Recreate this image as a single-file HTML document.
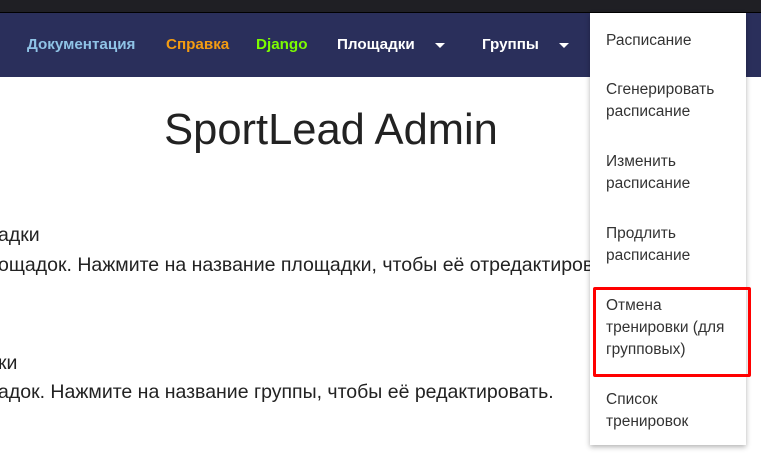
<!DOCTYPE html>
<html><head><meta charset="utf-8"><style>
body{margin:0;width:761px;height:457px;overflow:hidden;background:#fff;font-family:"Liberation Sans","DejaVu Sans",sans-serif;position:relative}
.top{position:absolute;left:0;top:0;width:761px;height:12px;background:#1f1f24;border-bottom:1px solid #000}
.nav{position:absolute;left:0;top:13px;width:761px;height:64px;background:#2a2f5b}
.nav span{position:absolute;top:23px;font-weight:bold;font-size:15.2px;white-space:nowrap}
.tri{position:absolute;top:43px;width:0;height:0;border-left:5px solid transparent;border-right:5px solid transparent;border-top:5px solid #fff}
h1{position:absolute;left:0;width:662px;text-align:center;top:106px;margin:0;font-weight:normal;font-size:43.5px;color:#222}
.t{position:absolute;left:-2px;font-size:19.5px;color:#222;white-space:nowrap}
.dd{position:absolute;left:590px;top:13px;width:156px;height:432px;background:#fff;box-shadow:0 2px 5px rgba(0,0,0,.3)}
.dd div{position:absolute;left:16px;font-size:15.5px;line-height:22px;color:#333;white-space:nowrap}
.red{position:absolute;left:593px;top:287px;width:152px;height:84px;border:3px solid #f00;border-radius:2px}
</style></head><body>
<div class="top"></div>
<div class="nav">
<span style="left:27px;color:#8fc3e6">Документация</span>
<span style="left:166px;color:#f39c12">Справка</span>
<span style="left:256px;color:#7cfc00">Django</span>
<span style="left:337px;color:#fff">Площадки</span>
<span style="left:482px;color:#fff">Группы</span>
</div>
<div class="tri" style="left:435px"></div>
<div class="tri" style="left:559px"></div>
<h1>SportLead Admin</h1>
<div class="t" style="top:224px">адки</div>
<div class="t" style="top:254px">ощадок. Нажмите на название площадки, чтобы её отредактировать.</div>
<div class="t" style="top:352px">ки</div>
<div class="t" style="top:381px">адок. Нажмите на название группы, чтобы её редактировать.</div>
<div class="dd">
<div style="top:17px">Расписание</div>
<div style="top:66px">Сгенерировать<br>расписание</div>
<div style="top:138px">Изменить<br>расписание</div>
<div style="top:210px">Продлить<br>расписание</div>
<div style="top:282px">Отмена<br>тренировки (для<br>групповых)</div>
<div style="top:376px">Список<br>тренировок</div>
</div>
<div class="red"></div>
</body></html>
